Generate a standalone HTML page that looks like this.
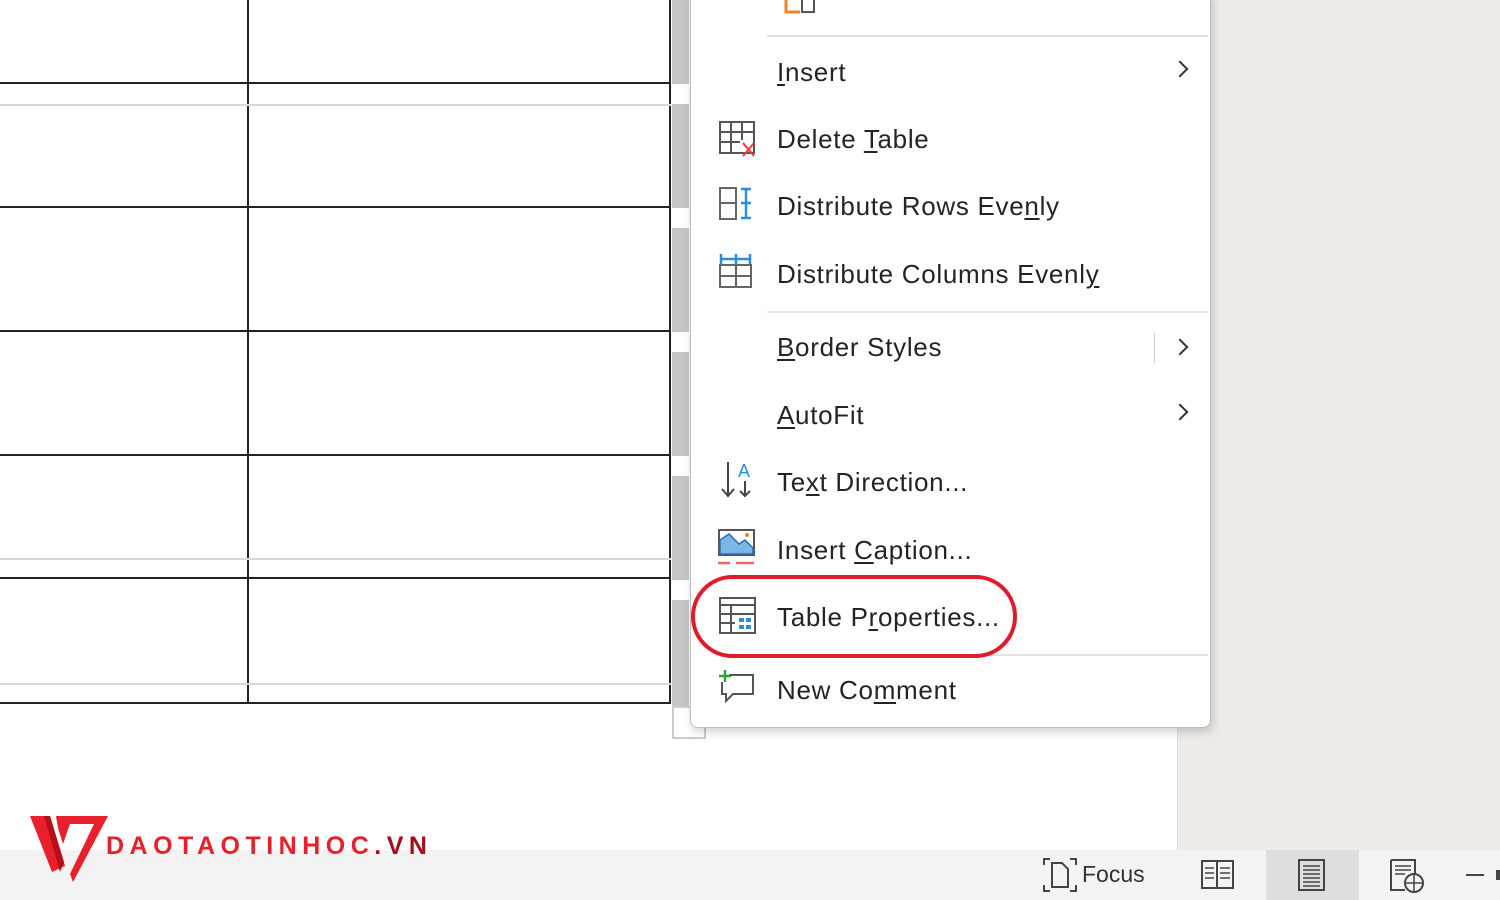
<!DOCTYPE html>
<html><head><style>
*{margin:0;padding:0;box-sizing:border-box}
body{width:1500px;height:900px;overflow:hidden;background:#fff;font-family:"Liberation Sans",sans-serif;position:relative}
.abs{position:absolute}
.h{position:absolute;left:0;width:671px;height:2px;background:#222}
.hl{position:absolute;left:0;width:671px;height:2px;background:#d8d8d8}
.menu{position:absolute;left:690px;top:-10px;width:521px;height:738px;background:#fff;border:1px solid #bdbdbd;border-radius:8px;box-shadow:2px 4px 10px rgba(0,0,0,.18)}
.it{position:absolute;left:777px;font-size:26px;color:#242424;letter-spacing:0.7px;white-space:nowrap}
.it u{text-decoration:underline;text-underline-offset:3px}
.sep{position:absolute;left:767px;width:441px;height:2px;background:#e3e3e3}
.chev{position:absolute;left:1174px;width:12px;height:12px;border-right:2px solid #333;border-top:2px solid #333;transform:rotate(45deg)}
</style></head><body>
<div class="abs" style="left:1177px;top:0;width:323px;height:850px;background:#efebe8;border-left:1px solid #ddd"></div>
<div class="abs" style="left:672px;top:0;width:17px;height:712px;background:#c6c6c6"></div>
<div class="abs" style="left:672px;top:84px;width:17px;height:20px;background:#fff"></div>
<div class="abs" style="left:672px;top:208px;width:17px;height:20px;background:#fff"></div>
<div class="abs" style="left:672px;top:332px;width:17px;height:20px;background:#fff"></div>
<div class="abs" style="left:672px;top:456px;width:17px;height:20px;background:#fff"></div>
<div class="abs" style="left:672px;top:580px;width:17px;height:20px;background:#fff"></div>
<div class="abs" style="left:672px;top:706px;width:34px;height:33px;border:2px solid #ccc;background:#fff"></div>
<div class="abs" style="left:247px;top:0;width:2px;height:704px;background:#222"></div>
<div class="abs" style="left:669px;top:0;width:2px;height:704px;background:#222"></div>
<div class="h" style="top:82px"></div><div class="hl" style="top:104px"></div>
<div class="h" style="top:206px"></div>
<div class="h" style="top:330px"></div>
<div class="h" style="top:454px"></div>
<div class="hl" style="top:558px"></div><div class="h" style="top:577px"></div>
<div class="hl" style="top:683px"></div><div class="h" style="top:702px"></div>

<div class="menu"></div>
<svg class="abs" style="left:780px;top:0" width="45" height="16"><path d="M6 0V12H20" stroke="#e8872a" stroke-width="3" fill="none"/><rect x="22" y="-2" width="12" height="14" stroke="#555" stroke-width="2" fill="none"/></svg>
<div class="sep" style="top:35px"></div>
<div class="it" style="top:57px"><u>I</u>nsert</div><div class="chev" style="top:63px"></div>
<svg class="abs" style="left:718px;top:120px" width="40" height="38"><g stroke="#555" stroke-width="2" fill="none"><rect x="2" y="2" width="34" height="31"/><path d="M2 12H36M2 22H22M13 2V33M24 2V20"/></g><path d="M25 23L36 36M36 23L25 36" stroke="#e83a3a" stroke-width="2"/></svg>
<div class="it" style="top:124px">Delete <u>T</u>able</div>
<svg class="abs" style="left:718px;top:186px" width="40" height="38"><g stroke="#666" stroke-width="2" fill="none"><rect x="2" y="2" width="16" height="31"/><path d="M2 17H18"/></g><path d="M28 2V33M23 3H33M23 17H33M23 32H33" stroke="#2a8fd8" stroke-width="2.5"/></svg>
<div class="it" style="top:191px">Distribute Rows Eve<u>n</u>ly</div>
<svg class="abs" style="left:718px;top:252px" width="40" height="38"><g stroke="#666" stroke-width="2" fill="none"><rect x="2" y="13" width="31" height="22"/><path d="M2 24H33M18 13V35"/></g><path d="M2 7H33M3 2V12M18 2V12M32 2V12" stroke="#2a8fd8" stroke-width="2.5"/></svg>
<div class="it" style="top:259px">Distribute Columns Evenl<u>y</u></div>
<div class="sep" style="top:311px"></div>
<div class="it" style="top:332px"><u>B</u>order Styles</div>
<div class="abs" style="left:1154px;top:333px;width:1px;height:30px;background:#ccc"></div>
<div class="chev" style="top:341px"></div>
<div class="it" style="top:400px"><u>A</u>utoFit</div><div class="chev" style="top:406px"></div>
<svg class="abs" style="left:718px;top:458px" width="40" height="42"><path d="M10 4V38M4 31L10 38L16 31" stroke="#444" stroke-width="2" fill="none"/><text x="20" y="19" font-size="18" fill="#2a8fd8" font-family="Liberation Sans">A</text><path d="M27 23V38M22 33L27 38L32 33" stroke="#444" stroke-width="2" fill="none"/></svg>
<div class="it" style="top:467px">Te<u>x</u>t Direction...</div>
<svg class="abs" style="left:717px;top:528px" width="40" height="40"><rect x="2" y="2" width="35" height="25" fill="#fff" stroke="#555" stroke-width="2"/><path d="M3 26L3 12L12 6L22 16L28 12L36 20V26Z" fill="#7cb6e8" stroke="#2a6fb0" stroke-width="1.5"/><circle cx="30" cy="7" r="2" fill="#e8872a"/><path d="M1 35H13M19 35H37" stroke="#ee6a6a" stroke-width="2.5"/></svg>
<div class="it" style="top:535px">Insert <u>C</u>aption...</div>
<svg class="abs" style="left:718px;top:596px" width="40" height="40"><g stroke="#555" stroke-width="2" fill="none"><rect x="2" y="2" width="35" height="35"/><path d="M2 9H37M2 18H37M2 27H17M13 9V37"/></g><rect x="19" y="20" width="16" height="15" fill="#fff"/><rect x="21" y="22" width="5" height="4" fill="#2a8fd8"/><rect x="28" y="22" width="5" height="4" fill="#2a8fd8"/><rect x="21" y="29" width="5" height="4" fill="#2a8fd8"/><rect x="28" y="29" width="5" height="4" fill="#2a8fd8"/></svg>
<div class="it" style="top:602px">Table P<u>r</u>operties...</div>
<div class="sep" style="top:654px"></div>
<div class="abs" style="left:691px;top:575px;width:326px;height:83px;border:4px solid #e01c2a;border-radius:42px"></div>
<svg class="abs" style="left:716px;top:668px" width="42" height="40"><path d="M13 7H37V26H17L10 33V26H6V14" stroke="#555" stroke-width="2" fill="none"/><path d="M9 2V14M3 8H15" stroke="#2aa33a" stroke-width="2.5"/></svg>
<div class="it" style="top:675px">New Co<u>m</u>ment</div>

<div class="abs" style="left:0;top:850px;width:1500px;height:50px;background:#f3f3f3"></div>
<svg class="abs" style="left:30px;top:814px" width="80" height="68"><path d="M0 2H20L35 52L22 58Z" fill="#e8202c"/><path d="M26 2H78L43 68L40 60L64 10H40L33 30L28 14Z" fill="#e8202c"/><path d="M20 2L34 48L30 58L14 2Z" fill="#b5101a"/></svg>
<div class="abs" style="left:106px;top:832px;font-size:25px;font-weight:bold;color:#e8202c;letter-spacing:5.5px;white-space:nowrap">DAOTAOTINHOC<span style="color:#a01018">.VN</span></div>
<div class="abs" style="left:1266px;top:850px;width:93px;height:50px;background:#dedede"></div>
<svg class="abs" style="left:1042px;top:857px" width="36" height="36"><path d="M2 8V2H8M28 2H34V8M2 28V34H8M28 34H34V28" stroke="#444" stroke-width="2" fill="none"/><path d="M10 6H20L26 12V30H10Z" stroke="#444" stroke-width="2" fill="none"/></svg>
<div class="abs" style="left:1082px;top:861px;font-size:23px;color:#333">Focus</div>
<svg class="abs" style="left:1200px;top:858px" width="36" height="34"><path d="M2 3H17V30H2ZM17 3H33V30H17" stroke="#444" stroke-width="2" fill="none"/><path d="M5 10H14M5 15H14M5 20H14M20 10H30M20 15H30M20 20H30" stroke="#444" stroke-width="1.5"/></svg>
<svg class="abs" style="left:1297px;top:858px" width="30" height="34"><rect x="2" y="2" width="25" height="30" stroke="#444" stroke-width="2" fill="none"/><path d="M6 8H23M6 12H23M6 16H23M6 20H23M6 24H23M6 28H23" stroke="#444" stroke-width="1.5"/></svg>
<svg class="abs" style="left:1389px;top:858px" width="36" height="36"><path d="M2 2H26V16M2 2V32H16" stroke="#444" stroke-width="2" fill="none"/><path d="M6 8H22M6 12H22M6 16H16" stroke="#444" stroke-width="1.5"/><circle cx="25" cy="25" r="9" stroke="#444" stroke-width="2" fill="#f3f3f3"/><path d="M16 25H34M25 16V34" stroke="#444" stroke-width="1.5"/></svg>
<div class="abs" style="left:1466px;top:874px;width:18px;height:2px;background:#444"></div>
<div class="abs" style="left:1496px;top:870px;width:4px;height:10px;background:#444"></div>
</body></html>
